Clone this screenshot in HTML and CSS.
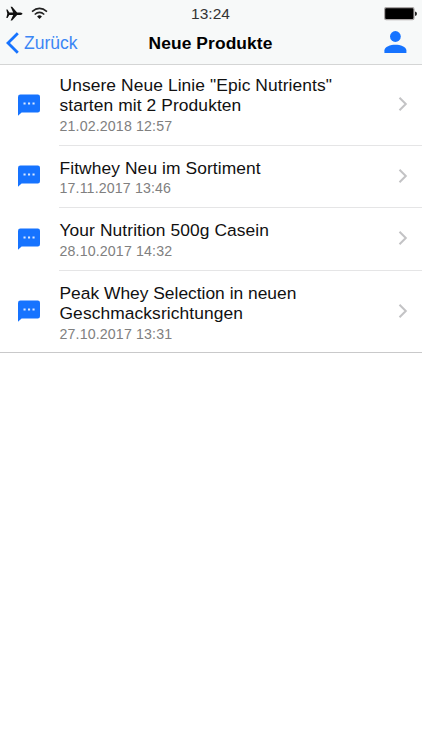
FILE: index.html
```html
<!DOCTYPE html>
<html lang="de">
<head>
<meta charset="utf-8">
<title>Neue Produkte</title>
<link rel="stylesheet" href="styles.css">
</head>
<body>
<svg class="symbols" width="0" height="0" aria-hidden="true">
  <symbol id="message" viewBox="0 0 22 22">
    <path d="M2.4 0.5H19.8Q22 0.5 22 2.7V16.2Q22 18.4 19.8 18.4H3.6L0 21.8V2.9Q0 0.5 2.4 0.5Z" fill="#1673ff"/>
    <path d="M5.5 8.4h2.1v2.1H5.5zM10 8.4h2.1v2.1H10zM14.5 8.4h2.1v2.1h-2.1z" fill="#d9e8ff"/>
  </symbol>
  <symbol id="chevron" viewBox="0 0 10 16">
    <path d="M1.5 1.7L7.8 8L1.5 14.3" fill="none" stroke="#c3c3c5" stroke-width="2"/>
  </symbol>
</svg>
<header class="header">
  <div class="status">
    <div class="signals">
      <svg width="17" height="16" viewBox="0 0 17 16"><path d="M0.3 3.5h1.2l1.8 3h3.9L4.6 0.8h1.5l5 5.7h3.4q2 .3 2 1.2t-2 1.2h-3.4l-5 5.7H4.6l2.6-5.7H3.3l-1.8 3H0.3l1-4.2z" fill="#111"/></svg>
      <svg width="17" height="13" viewBox="0 0 17 13"><g fill="none" stroke="#222" stroke-width="1.5"><path d="M1 4.6Q8.5-1.8 16 4.6"/><path d="M3.7 7.5Q8.5 3.3 13.3 7.5"/></g><path d="M6.1 9.4Q8.5 7.3 10.9 9.4L8.5 12Z" fill="#111"/></svg>
    </div>
    <time class="clock">13:24</time>
    <svg class="battery" width="34" height="14" viewBox="0 0 34 14"><rect x="0.6" y="0.6" width="29.4" height="12" rx="1.6" fill="#000" stroke="#aaa6a6" stroke-width="1.2"/><path d="M31 4.5q2 .3 2 2.2t-2 2.2z" fill="#222"/></svg>
  </div>
  <nav class="nav">
    <a class="back"><svg width="14" height="22" viewBox="0 0 14 22"><path d="M11.8 1.2L2 11L11.8 20.8" fill="none" stroke="#1673ff" stroke-width="2.8"/></svg><span>Zurück</span></a>
    <h1>Neue Produkte</h1>
    <svg class="profile" width="23" height="23" viewBox="0 0 23 23"><circle cx="11.4" cy="5.5" r="5.4" fill="#1673ff"/><path d="M0.4 22v-2.5C0.4 15.8 6.5 13.8 11.4 13.8s11 2 11 5.7V22z" fill="#1673ff"/></svg>
  </nav>
</header>
<main class="list">
  <article class="row tall">
    <svg class="message"><use href="#message"/></svg>
    <div class="body"><div class="text"><h2>Unsere Neue Linie "Epic Nutrients"<br>starten mit 2 Produkten</h2><time>21.02.2018 12:57</time></div><svg class="chevron"><use href="#chevron"/></svg></div>
  </article>
  <article class="row">
    <svg class="message"><use href="#message"/></svg>
    <div class="body"><div class="text"><h2>Fitwhey Neu im Sortiment</h2><time>17.11.2017 13:46</time></div><svg class="chevron"><use href="#chevron"/></svg></div>
  </article>
  <article class="row third">
    <svg class="message"><use href="#message"/></svg>
    <div class="body"><div class="text"><h2>Your Nutrition 500g Casein</h2><time>28.10.2017 14:32</time></div><svg class="chevron"><use href="#chevron"/></svg></div>
  </article>
  <article class="row tall last">
    <svg class="message"><use href="#message"/></svg>
    <div class="body"><div class="text"><h2><span class="narrow">Peak Whey Selection in neuen</span><br>Geschmacksrichtungen</h2><time>27.10.2017 13:31</time></div><svg class="chevron"><use href="#chevron"/></svg></div>
  </article>
</main>
</body>
</html>
```
FILE: styles.css
```css
* { box-sizing: border-box; }
body { margin: 0; min-height: 750px; background: #fff; color: #111; font-family: "Liberation Sans", Arial, sans-serif; }
.symbols { display: none; }
svg { display: block; flex: none; }
h1, h2 { margin: 0; }
.header { height: 65px; background: #f7f9f9; border-bottom: 1px solid #d4d5d5; }
.status { height: 28px; display: grid; grid-template-columns: 1fr auto 1fr; align-items: center; padding: 0 5px 0 6px; }
.signals { display: flex; align-items: center; gap: 8px; }
.signals svg:last-child { margin-top: -2px; }
.clock { font-size: 15.5px; line-height: 28px; color: #333; margin-right: 2px; }
.battery { justify-self: end; margin-right: -1px; }
.nav { height: 30px; display: grid; grid-template-columns: 1fr auto 1fr; align-items: center; padding: 0 15px 0 6px; }
.back { display: flex; align-items: center; gap: 4px; color: #3c86f5; font-size: 17.5px; }
.nav h1 { font-size: 17.4px; line-height: 30px; letter-spacing: 0.1px; margin-left: 8px; color: #000; }
.profile { justify-self: end; margin-top: -2px; }
.row { height: 62px; display: flex; align-items: center; padding-left: 18px; }
.row.third { height: 63px; }
.row.tall { height: 81px; }
.row.last { height: 82px; border-bottom: 1px solid #c9c9ca; }
.message { width: 22px; height: 22px; margin: -2px 19px 0 0; }
.body { flex: 1; height: 100%; display: flex; align-items: center; justify-content: space-between; padding-right: 14px; border-bottom: 1px solid #e5e5e6; }
.last .body { border-bottom: 0; }
.chevron { width: 10px; height: 16px; margin-top: -2px; }
.text { padding: 3px 0 0 0.5px; }
.tall .text { padding-top: 0; }
.last .text { padding-top: 3px; }
h2 { font-size: 17.4px; font-weight: 400; line-height: 20.5px; letter-spacing: 0.09px; white-space: nowrap; }
.narrow { letter-spacing: 0; }
.text time { display: block; font-size: 14.2px; line-height: 20px; letter-spacing: 0.14px; color: #808080; }
```
